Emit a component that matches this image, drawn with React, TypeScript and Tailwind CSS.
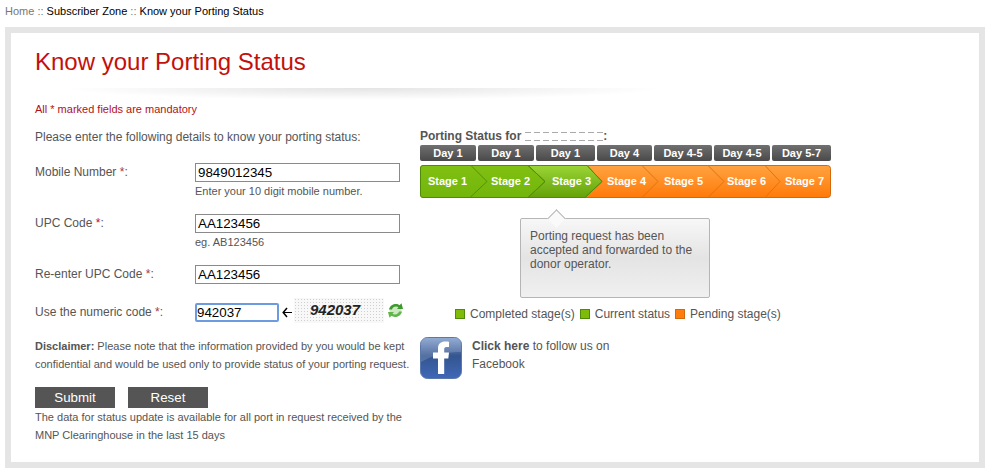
const days = [
  { label: 'Day 1', w: 'w-[56px]' },
  { label: 'Day 1', w: 'w-[56px]' },
  { label: 'Day 1', w: 'w-[59px]' },
  { label: 'Day 4', w: 'w-[55px]' },
  { label: 'Day 4-5', w: 'w-[58px]' },
  { label: 'Day 4-5', w: 'w-[56px]' },
  { label: 'Day 5-7', w: 'w-[59px]' },
]

const stages = [
  { label: 'Stage 1', ml: 'ml-[8px]' },
  { label: 'Stage 2', ml: 'ml-[24px]' },
  { label: 'Stage 3', ml: 'ml-[22px]' },
  { label: 'Stage 4', ml: 'ml-[16px]' },
  { label: 'Stage 5', ml: 'ml-[18px]' },
  { label: 'Stage 6', ml: 'ml-[24px]' },
  { label: 'Stage 7', ml: 'ml-[19px]' },
]

const StageBackground = () => (
  <svg className="absolute inset-0" width="411" height="33" viewBox="0 0 411 33">
    <defs>
      <linearGradient id="green" x1="0" y1="0" x2="0" y2="1">
        <stop offset="0" stopColor="#7fc012" />
        <stop offset="1" stopColor="#74b50c" />
      </linearGradient>
      <linearGradient id="current" x1="0" y1="0" x2="0" y2="1">
        <stop offset="0" stopColor="#9bd437" />
        <stop offset="1" stopColor="#64a208" />
      </linearGradient>
      <linearGradient id="orange" x1="0" y1="0" x2="0" y2="1">
        <stop offset="0" stopColor="#ffa341" />
        <stop offset="1" stopColor="#ff7a09" />
      </linearGradient>
    </defs>
    <rect x="0.5" y="0.5" width="410" height="32" rx="3" fill="url(#orange)" stroke="#d4690a" />
    <path d="M3 .5H167L182 16.5L165 32.5H3Q.5 32.5 .5 30V3Q.5 .5 3 .5Z" fill="url(#green)" stroke="#4f8a08" />
    <path d="M108 .5H167L182 16.5L165 32.5H108L125 16.5Z" fill="url(#current)" stroke="#4f8a08" />
    <path d="M51 .5L67 16.5L50 32.5M108 .5L125 16.5L108 32.5" fill="none" stroke="#558f0a" />
    <path d="M222 .5L238 16.5L222 32.5M288 .5L304 16.5L288 32.5M345 .5L360 16.5L345 32.5" fill="none" stroke="#e0730f" />
  </svg>
)

const FacebookIcon = () => (
  <svg width="42" height="42" viewBox="0 0 42 42">
    <defs>
      <linearGradient id="fb" x1="0" y1="0" x2="0" y2="1">
        <stop offset="0" stopColor="#7f9dcc" />
        <stop offset="0.45" stopColor="#34558f" />
        <stop offset="1" stopColor="#3f68b8" />
      </linearGradient>
    </defs>
    <rect x="0.5" y="0.5" width="41" height="41" rx="7" fill="url(#fb)" stroke="#5a78aa" />
    <path d="M1 6Q1 1 6 1H36Q41 1 41 6V15Q20 14 1 25Z" fill="#fff" fillOpacity="0.16" />
    <path d="M18 37V21.5H13V15.5H18V11.5C18 6.5 21 4.5 25 4.5C27 4.5 28.5 4.7 29 4.8V10H26.4C24.6 10 24.2 11 24.2 12.3V15.5H29L28.3 21.5H24.2V37Z" fill="#fff" />
  </svg>
)

const RefreshIcon = () => (
  <svg width="17" height="17" viewBox="0 0 17 17">
    <circle cx="8.5" cy="8.5" r="6" fill="#cfe8c4" />
    <path d="M2 7.5C3 3.5 6 2 9 2C10.5 2 11.5 2.5 12.5 3.2L14.5 1.2L16 7H10L11.5 5.3C10.8 4.8 10 4.6 9 4.6C7 4.6 5.5 5.7 5 7.5Z" fill="#3f9a2e" />
    <path d="M15 9.5C14 13.5 11 15 8 15C6.5 15 5.5 14.5 4.5 13.8L2.5 15.8L1 10H7L5.5 11.7C6.2 12.2 7 12.4 8 12.4C10 12.4 11.5 11.3 12 9.5Z" fill="#63b54a" />
  </svg>
)

const ArrowIcon = () => (
  <svg width="10" height="11" viewBox="0 0 10 11">
    <path d="M5 1L1.2 5.5L5 10" fill="none" stroke="#000" strokeWidth="1.5" />
    <path d="M1.5 5.5H10" fill="none" stroke="#000" strokeWidth="1" />
  </svg>
)

const App = () => {
  return (
    <div className="w-[990px] h-[475px] bg-white overflow-hidden font-['Liberation_Sans',Arial,sans-serif] text-[12px] text-[#555]">
      <div className="h-[27px] pl-[5px] pt-[4px] text-[11px] leading-[14px] text-black">
        <span className="text-[#777]">Home</span> <span className="text-[#777]">::</span> Subscriber Zone <span className="text-[#777]">::</span> Know your Porting Status
      </div>

      <div className="mx-[5px] h-[441px] border-[6px] border-[#e6e5e5] bg-white flex flex-col pl-[24px]">
        <h1 className="mt-[14px] text-[24px] leading-[30px] text-[#c4100c]">Know your Porting Status</h1>
        <div className="ml-[25px] mt-[11px] h-[12px] w-[605px] bg-[radial-gradient(ellipse_at_top,#e4e4e4,transparent_70%)]" />
        <p className="mt-[2px] text-[11px] leading-[14px] text-[#b3101a]">All * marked fields are mandatory</p>

        <div className="flex mt-[14px]">
          <div className="w-[385px] shrink-0">
            <p className="leading-[14px]">Please enter the following details to know your porting status:</p>

            <div className="flex mt-[19px] h-[51px]">
              <label className="w-[160px] pt-[2px] leading-[14px]">Mobile Number <span className="text-[#a8383c]">*</span>:</label>
              <div>
                <input readOnly value="9849012345" className="block w-[205px] h-[19px] border border-[#8a8a8a] px-[2px] text-[13.33px] text-black" />
                <p className="mt-[2px] text-[11px] leading-[14px]">Enter your 10 digit mobile number.</p>
              </div>
            </div>

            <div className="flex h-[51px]">
              <label className="w-[160px] pt-[2px] leading-[14px]">UPC Code <span className="text-[#c4100c]">*</span>:</label>
              <div>
                <input readOnly value="AA123456" className="block w-[205px] h-[19px] border border-[#8a8a8a] px-[2px] text-[13.33px] text-black" />
                <p className="mt-[2px] text-[11px] leading-[14px]">eg. AB123456</p>
              </div>
            </div>

            <div className="flex h-[38px]">
              <label className="w-[160px] pt-[2px] leading-[14px]">Re-enter UPC Code <span className="text-[#a8383c]">*</span>:</label>
              <input readOnly value="AA123456" className="block w-[205px] h-[19px] border border-[#8a8a8a] px-[2px] text-[13.33px] text-black" />
            </div>

            <div className="flex h-[25px]">
              <label className="w-[160px] pt-[2px] leading-[14px]">Use the numeric code <span className="text-[#a8383c]">*</span>:</label>
              <input readOnly value="942037" className="block w-[84px] h-[19px] border-2 border-[#6c9be0] rounded-[2px] px-0 text-[13.33px] text-black" />
              <span className="h-[19px] w-[15px] flex items-center justify-center"><ArrowIcon /></span>
              <div className="-mt-[5px] h-[25px] w-[90px] flex items-center justify-center pr-[8px] bg-[radial-gradient(#cfcfcf_0.6px,#f8f8f8_0.8px)] bg-[length:3px_3px] italic font-bold text-[15px] text-[#222]">942037</div>
              <div className="ml-[3px] -mt-[1px]"><RefreshIcon /></div>
            </div>

            <p className="mt-[9px] text-[11px] leading-[18px] whitespace-nowrap">
              <b>Disclaimer:</b> Please note that the information provided by you would be kept<br />
              confidential and would be used only to provide status of your porting request.
            </p>

            <div className="flex gap-[13px] mt-[14px]">
              <button className="w-[80px] h-[21px] bg-[#555] text-white text-[13.33px] leading-[21px]">Submit</button>
              <button className="w-[80px] h-[21px] bg-[#555] text-white text-[13.33px] leading-[21px]">Reset</button>
            </div>

            <p className="text-[11px] leading-[18px] whitespace-nowrap">
              The data for status update is available for all port in request received by the<br />
              MNP Clearinghouse in the last 15 days
            </p>
          </div>

          <div className="w-[411px] shrink-0">
            <div className="flex items-center h-[14px] -mt-[1px] font-bold leading-[14px]">
              Porting Status for
              <span className="flex ml-[4px] gap-[3px]">
                {[0, 1, 2, 3, 4, 5, 6, 7, 8].map((i) => (
                  <span key={i} className="block w-[6px] h-[9px] border-y border-dashed border-[#aaa]" />
                ))}
              </span>
              :
            </div>

            <div className="flex gap-[2px] mt-[2px]">
              {days.map((d, i) => (
                <div key={i} className={`${d.w} h-[16px] rounded-[2px] bg-gradient-to-b from-[#707070] to-[#4a4a4a] text-center text-white font-bold text-[11px] leading-[16px]`}>
                  {d.label}
                </div>
              ))}
            </div>

            <div className="relative flex mt-[4px] w-[411px] h-[33px]">
              <StageBackground />
              {stages.map((s) => (
                <div key={s.label} className={`${s.ml} w-[39px] relative text-center text-white font-bold text-[11px] leading-[33px] whitespace-nowrap`}>
                  {s.label}
                </div>
              ))}
            </div>

            <div className="relative ml-[100px] mt-[20px] w-[190px] h-[80px] border border-[#b5b5b5] rounded-[2px] bg-gradient-to-b from-[#f7f7f7] via-[#e4e4e4] to-[#f0f0f0] pl-[9px] pt-[10px] leading-[14px]">
              <span className="absolute -top-[7px] left-[29px] w-[13px] h-[13px] rotate-45 bg-[#fafafa] border-l border-t border-[#b5b5b5]" />
              Porting request has been<br />
              accepted and forwarded to the<br />
              donor operator.
            </div>

            <div className="flex items-center ml-[35px] mt-[9px] h-[14px] leading-[14px]">
              <span className="w-[10px] h-[10px] bg-[#7fbc0a] border border-[#4f8a08]" />
              <span className="ml-[5px]">Completed stage(s)</span>
              <span className="ml-[5px] w-[10px] h-[10px] bg-[#7fbc0a] border border-[#4f8a08]" />
              <span className="ml-[5px]">Current status</span>
              <span className="ml-[5px] w-[10px] h-[10px] bg-[#ff7d0c] border border-[#d4690a]" />
              <span className="ml-[5px]">Pending stage(s)</span>
            </div>

            <div className="flex mt-[16px]">
              <FacebookIcon />
              <p className="ml-[10px] leading-[18px]">
                <b>Click here</b> to follow us on<br />
                Facebook
              </p>
            </div>
          </div>
        </div>
      </div>
    </div>
  )
}

export default App
